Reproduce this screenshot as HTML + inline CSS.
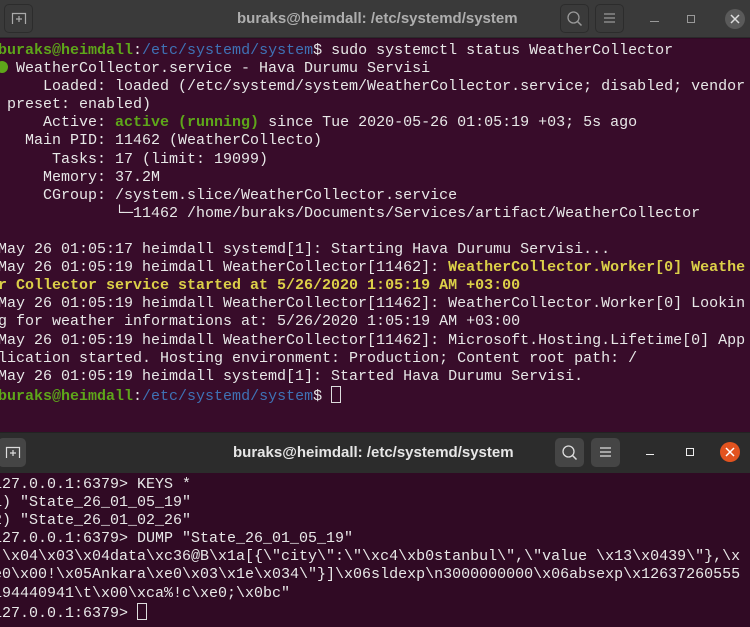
<!DOCTYPE html>
<html><head><meta charset="utf-8"><style>
*{margin:0;padding:0;box-sizing:border-box}
body{width:750px;height:627px;overflow:hidden;background:#300a24;position:relative;font-family:"Liberation Sans",sans-serif}
.tb{position:absolute;left:0;width:750px;}
.title{position:absolute;font-weight:bold;font-size:15px;color:#d0d0d0;white-space:nowrap}
.btn{position:absolute;width:29px;height:29px;border-radius:5px}
pre{position:absolute;font-family:"Liberation Mono",monospace;font-size:15px;line-height:18.1px;color:#e8e8e8;white-space:pre}
.g{color:#5ea61a;font-weight:bold}.b{color:#3f72b5}.y{color:#dcd048;font-weight:bold}.a{color:#5ea61a;font-weight:bold}
.cur{display:inline-block;width:10px;height:17px;border:1px solid #ddd;vertical-align:-3px}
.dot{display:inline-block;width:12px;height:12px;border-radius:50%;background:#5ea61a;vertical-align:-1px;margin-left:-2px;margin-right:-1px}
</style></head><body>
<div class="tb" style="top:0;height:38px;background:#3a3a3a;border-bottom:1px solid #2a2a2a"></div>
<div class="btn" style="left:4px;top:4px;border:1px solid #2c2c2c;background:#3a3a3a"></div>
<svg style="position:absolute;left:11px;top:11px" width="16" height="14"><path d="M1.5 13V2.5H14.5V13" stroke="#aaa" fill="none" stroke-width="1.2"/><path d="M8 5v6M5 8h6" stroke="#aaa" stroke-width="1.2"/></svg>
<div class="title" style="left:237px;top:10px;color:#aeaeae">buraks@heimdall: /etc/systemd/system</div>
<div class="btn" style="left:560px;top:4px;border:1px solid #2c2c2c"></div>
<svg style="position:absolute;left:566px;top:10px" width="18" height="18"><circle cx="7.5" cy="7.5" r="5.5" stroke="#999" fill="none" stroke-width="1.3"/><path d="M11.5 11.5l4 4" stroke="#999" stroke-width="1.5"/></svg>
<div class="btn" style="left:595px;top:4px;border:1px solid #2c2c2c"></div>
<svg style="position:absolute;left:602px;top:11px" width="16" height="14"><path d="M2 3h11M2 7h11M2 11h11" stroke="#999" stroke-width="1.2"/></svg>
<div style="position:absolute;left:650px;top:21px;width:9px;height:1px;background:#999"></div>
<div style="position:absolute;left:687px;top:15px;width:8px;height:8px;border:1px solid #999"></div>
<div style="position:absolute;left:725px;top:9px;width:20px;height:20px;border-radius:50%;background:#5a5a5a"></div>
<svg style="position:absolute;left:730px;top:14px" width="10" height="10"><path d="M1 1l8 8M9 1l-8 8" stroke="#ddd" stroke-width="1.5"/></svg>
<div style="position:absolute;left:0;top:39px;width:750px;height:393px;background:#380c2a"></div>
<pre style="left:-2px;top:42px"><span class="g">buraks@heimdall</span>:<span class="b">/etc/systemd/system</span>$ sudo systemctl status WeatherCollector
<span class="dot"></span> WeatherCollector.service - Hava Durumu Servisi
     Loaded: loaded (/etc/systemd/system/WeatherCollector.service; disabled; vendor
 preset: enabled)
     Active: <span class="a">active (running)</span> since Tue 2020-05-26 01:05:19 +03; 5s ago
   Main PID: 11462 (WeatherCollecto)
      Tasks: 17 (limit: 19099)
     Memory: 37.2M
     CGroup: /system.slice/WeatherCollector.service
             └─11462 /home/buraks/Documents/Services/artifact/WeatherCollector

May 26 01:05:17 heimdall systemd[1]: Starting Hava Durumu Servisi...
May 26 01:05:19 heimdall WeatherCollector[11462]: <span class="y">WeatherCollector.Worker[0] Weathe</span>
<span class="y">r Collector service started at 5/26/2020 1:05:19 AM +03:00</span>
May 26 01:05:19 heimdall WeatherCollector[11462]: WeatherCollector.Worker[0] Lookin
g for weather informations at: 5/26/2020 1:05:19 AM +03:00
May 26 01:05:19 heimdall WeatherCollector[11462]: Microsoft.Hosting.Lifetime[0] App
lication started. Hosting environment: Production; Content root path: /
May 26 01:05:19 heimdall systemd[1]: Started Hava Durumu Servisi.
<span class="g">buraks@heimdall</span>:<span class="b">/etc/systemd/system</span>$ <span class="cur"></span></pre>
<div class="tb" style="top:432px;height:41px;background:#2c2c2c;border-top:1px solid #222"></div>
<div class="btn" style="left:-2px;top:438px;background:#454545;width:28px"></div>
<svg style="position:absolute;left:5px;top:445px" width="16" height="14"><path d="M1.5 13V2.5H14.5V13" stroke="#ddd" fill="none" stroke-width="1.2"/><path d="M8 5v6M5 8h6" stroke="#ddd" stroke-width="1.2"/></svg>
<div class="title" style="left:233px;top:444px;color:#e6e6e6">buraks@heimdall: /etc/systemd/system</div>
<div class="btn" style="left:555px;top:438px;background:#454545"></div>
<svg style="position:absolute;left:561px;top:444px" width="18" height="18"><circle cx="7.5" cy="7.5" r="5.5" stroke="#ddd" fill="none" stroke-width="1.3"/><path d="M11.5 11.5l4 4" stroke="#ddd" stroke-width="1.5"/></svg>
<div class="btn" style="left:591px;top:438px;background:#454545"></div>
<svg style="position:absolute;left:598px;top:445px" width="16" height="14"><path d="M2 3h11M2 7h11M2 11h11" stroke="#ddd" stroke-width="1.2"/></svg>
<div style="position:absolute;left:646px;top:454px;width:8px;height:1px;background:#eee"></div>
<div style="position:absolute;left:686px;top:448px;width:8px;height:8px;border:1px solid #eee"></div>
<div style="position:absolute;left:720px;top:442px;width:20px;height:20px;border-radius:50%;background:#e2531f"></div>
<svg style="position:absolute;left:725px;top:447px" width="10" height="10"><path d="M1 1l8 8M9 1l-8 8" stroke="#fff" stroke-width="1.5"/></svg>
<pre style="left:-7px;top:476px">127.0.0.1:6379> KEYS *
1) "State_26_01_05_19"
2) "State_26_01_02_26"
127.0.0.1:6379> DUMP "State_26_01_05_19"
"\x04\x03\x04data\xc36@B\x1a[{\"city\":\"\xc4\xb0stanbul\",\"value \x13\x0439\"},\x
e0\x00!\x05Ankara\xe0\x03\x1e\x034\"}]\x06sldexp\n3000000000\x06absexp\x12637260555
194440941\t\x00\xca%!c\xe0;\x0bc"
127.0.0.1:6379> <span class="cur"></span></pre>
</body></html>
